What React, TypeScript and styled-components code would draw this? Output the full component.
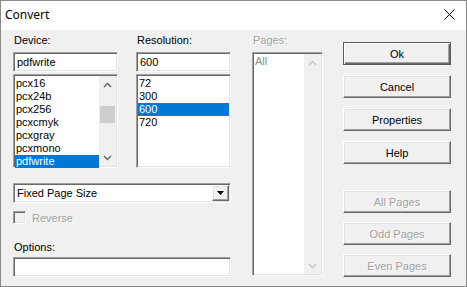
import React from "react";
import styled, { createGlobalStyle, css } from "styled-components";

const GlobalStyle = createGlobalStyle`
  html, body {
    margin: 0;
    padding: 0;
    background: #ffffff;
  }
  * {
    box-sizing: border-box;
  }
`;

const sunken = css`
  border: 1px solid;
  border-color: #a0a0a0 #ffffff #ffffff #a0a0a0;
  box-shadow: inset 1px 1px #696969, inset -1px -1px #e3e3e3;
`;

const raised = css`
  border: 1px solid;
  border-color: #ffffff #696969 #696969 #ffffff;
  box-shadow: inset -1px -1px #a0a0a0, inset 1px 1px #e3e3e3;
`;

const Window = styled.div`
  width: 467px;
  height: 287px;
  border: 1px solid #8a8a8a;
  background: #f0f0f0;
  display: flex;
  flex-direction: column;
  font-family: "Liberation Sans", Arial, sans-serif;
  font-size: 11px;
  color: #000;
`;

const TitleBar = styled.div`
  height: 29px;
  background: #ffffff;
  display: flex;
  align-items: center;
  justify-content: space-between;
  padding: 0 0 3px 4px;
  font-family: "Noto Sans", "Liberation Sans", sans-serif;
  font-size: 12px;
`;

const CloseBox = styled.div`
  width: 33px;
  height: 26px;
  display: flex;
  align-items: center;
  justify-content: center;
`;

const Body = styled.div`
  flex: 1;
  display: flex;
  padding: 3px 0 0 12px;
`;

const LeftCol = styled.div`
  width: 218px;
  display: flex;
  flex-direction: column;
`;

const TopRow = styled.div`
  display: flex;
  gap: 18px;
`;

const Field = styled.div<{ $w: number }>`
  width: ${(p) => p.$w}px;
  display: flex;
  flex-direction: column;
`;

const Label = styled.div<{ $disabled?: boolean; $gap?: number; $top?: number }>`
  height: 14px;
  line-height: 14px;
  padding-left: 1px;
  margin-top: ${(p) => p.$top ?? 0}px;
  margin-bottom: ${(p) => p.$gap ?? 5}px;
  color: ${(p) => (p.$disabled ? "#a0a0a0" : "#000")};
  text-shadow: ${(p) => (p.$disabled ? "1px 1px #ffffff" : "none")};
`;

const Edit = styled.div`
  ${sunken};
  height: 20px;
  background: #fff;
  padding: 2px 3px;
  line-height: 15px;
  white-space: nowrap;
`;

const ListBox = styled.div<{ $h: number; $top?: number }>`
  ${sunken};
  margin-top: ${(p) => p.$top ?? 0}px;
  height: ${(p) => p.$h}px;
  background: #fff;
  padding: 1px;
  display: flex;
`;

const Items = styled.div`
  flex: 1;
  display: flex;
  flex-direction: column;
  padding-top: 1px;
`;

const Item = styled.div<{ $sel?: boolean; $disabled?: boolean }>`
  height: 13px;
  line-height: 13px;
  padding-left: 1px;
  white-space: nowrap;
  background: ${(p) => (p.$sel ? "#0078d7" : "transparent")};
  color: ${(p) => (p.$sel ? "#fff" : p.$disabled ? "#8c8c8c" : "#000")};
`;

const ScrollBar = styled.div`
  width: 17px;
  background: #f0f0f0;
  display: flex;
  flex-direction: column;
`;

const ScrollArrow = styled.div`
  height: 17px;
  display: flex;
  align-items: center;
  justify-content: center;
`;

const Track = styled.div`
  flex: 1;
  display: flex;
  flex-direction: column;
  align-items: center;
`;

const Thumb = styled.div<{ $offset: number }>`
  margin-top: ${(p) => p.$offset}px;
  width: 15px;
  height: 17px;
  background: #cdcdcd;
`;

const Combo = styled.div`
  ${sunken};
  margin-top: 15px;
  height: 20px;
  background: #fff;
  display: flex;
  padding: 1px;
`;

const ComboText = styled.div`
  flex: 1;
  padding-left: 2px;
  line-height: 16px;
`;

const ComboButton = styled.div`
  ${raised};
  width: 17px;
  background: #f0f0f0;
  display: flex;
  align-items: center;
  justify-content: center;
`;

const CheckRow = styled.div`
  margin-top: 8px;
  height: 13px;
  display: flex;
  align-items: center;
  gap: 6px;
  color: #a0a0a0;
  text-shadow: 1px 1px #ffffff;
`;

const CheckBox = styled.div`
  ${sunken};
  width: 13px;
  height: 13px;
  background: #f0f0f0;
`;

const PagesCol = styled(Field)`
  margin-left: 21px;
`;

const ButtonCol = styled.div`
  width: 108px;
  margin-left: 20px;
  padding-top: 9px;
  display: flex;
  flex-direction: column;
`;

const ButtonGroup = styled.div<{ $gap: number; $top?: number }>`
  display: flex;
  flex-direction: column;
  gap: ${(p) => p.$gap}px;
  margin-top: ${(p) => p.$top ?? 0}px;
`;

const Button = styled.div<{ $default?: boolean; $disabled?: boolean }>`
  ${raised};
  height: 23px;
  background: #f0f0f0;
  display: flex;
  align-items: center;
  justify-content: center;
  color: ${(p) => (p.$disabled ? "#a0a0a0" : "#000")};
  text-shadow: ${(p) => (p.$disabled ? "1px 1px #ffffff" : "none")};
  ${(p) =>
    p.$default &&
    css`
      border-color: #5a5a5a;
      box-shadow: inset 1px 1px #ffffff, inset -1px -1px #696969,
        inset -2px -2px #a0a0a0;
    `}
`;

const Chevron = ({ up, color }: { up?: boolean; color: string }) => (
  <svg width="9" height="6" viewBox="0 0 9 6">
    <path
      d={up ? "M1 5 L4.5 1.5 L8 5" : "M1 1 L4.5 4.5 L8 1"}
      fill="none"
      stroke={color}
      strokeWidth="1.4"
    />
  </svg>
);

const devices = ["pcx16", "pcx24b", "pcx256", "pcxcmyk", "pcxgray", "pcxmono", "pdfwrite"];
const resolutions = ["72", "300", "600", "720"];

const App = () => {
  return (
    <>
      <GlobalStyle />
      <Window>
        <TitleBar>
          <span>Convert</span>
          <CloseBox>
            <svg width="11" height="11" viewBox="0 0 11 11">
              <path d="M0.5 0.5 L10.5 10.5 M10.5 0.5 L0.5 10.5" stroke="#000" strokeWidth="1" />
            </svg>
          </CloseBox>
        </TitleBar>
        <Body>
          <LeftCol>
            <TopRow>
              <Field $w={105}>
                <Label>Device:</Label>
                <Edit>pdfwrite</Edit>
                <ListBox $h={94} $top={2}>
                  <Items>
                    {devices.map((d) => (
                      <Item key={d} $sel={d === "pdfwrite"}>
                        {d}
                      </Item>
                    ))}
                  </Items>
                  <ScrollBar>
                    <ScrollArrow>
                      <Chevron up color="#606060" />
                    </ScrollArrow>
                    <Track>
                      <Thumb $offset={13} />
                    </Track>
                    <ScrollArrow>
                      <Chevron color="#606060" />
                    </ScrollArrow>
                  </ScrollBar>
                </ListBox>
              </Field>
              <Field $w={95}>
                <Label>Resolution:</Label>
                <Edit>600</Edit>
                <ListBox $h={94} $top={2}>
                  <Items>
                    {resolutions.map((r) => (
                      <Item key={r} $sel={r === "600"}>
                        {r}
                      </Item>
                    ))}
                  </Items>
                </ListBox>
              </Field>
            </TopRow>
            <Combo>
              <ComboText>Fixed Page Size</ComboText>
              <ComboButton>
                <svg width="7" height="4" viewBox="0 0 7 4">
                  <path d="M0 0 H7 L3.5 4 Z" fill="#000" />
                </svg>
              </ComboButton>
            </Combo>
            <CheckRow>
              <CheckBox />
              <span>Reverse</span>
            </CheckRow>
            <Label $top={16} $gap={3}>
              Options:
            </Label>
            <Edit />
          </LeftCol>
          <PagesCol $w={71}>
            <Label $disabled>Pages:</Label>
            <ListBox $h={224}>
              <Items>
                <Item $disabled>All</Item>
              </Items>
              <ScrollBar>
                <ScrollArrow>
                  <Chevron up color="#c4c4c4" />
                </ScrollArrow>
                <Track />
                <ScrollArrow>
                  <Chevron color="#c4c4c4" />
                </ScrollArrow>
              </ScrollBar>
            </ListBox>
          </PagesCol>
          <ButtonCol>
            <ButtonGroup $gap={10}>
              <Button $default>Ok</Button>
              <Button>Cancel</Button>
              <Button>Properties</Button>
              <Button>Help</Button>
            </ButtonGroup>
            <ButtonGroup $gap={9} $top={26}>
              <Button $disabled>All Pages</Button>
              <Button $disabled>Odd Pages</Button>
              <Button $disabled>Even Pages</Button>
            </ButtonGroup>
          </ButtonCol>
        </Body>
      </Window>
    </>
  );
};

export default App;
